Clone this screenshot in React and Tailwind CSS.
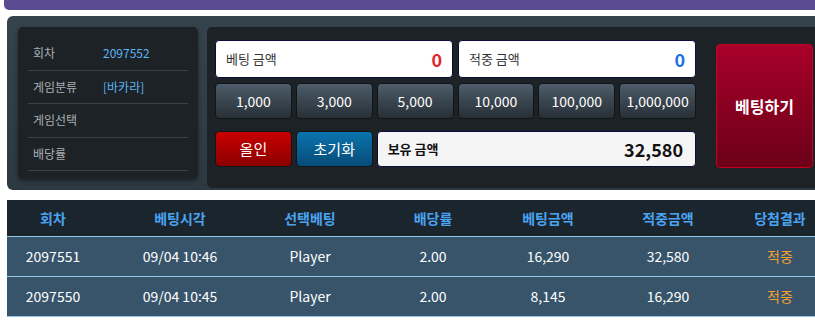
import React from "react";

const font = { fontFamily: '"Noto Sans CJK KR", "Noto Sans", sans-serif' };

const info = [
  { label: "회차", value: "2097552" },
  { label: "게임분류", value: "[바카라]" },
  { label: "게임선택", value: "" },
  { label: "배당률", value: "" },
];

const chips = ["1,000", "3,000", "5,000", "10,000", "100,000", "1,000,000"];

const rows = [
  ["2097551", "09/04 10:46", "Player", "2.00", "16,290", "32,580", "적중"],
  ["2097550", "09/04 10:45", "Player", "2.00", "8,145", "16,290", "적중"],
];

const heads = ["회차", "베팅시각", "선택베팅", "배당률", "베팅금액", "적중금액", "당첨결과"];

const cols = "grid grid-cols-[92px_162px_98px_148px_82px_158px_66px]";

export default function App() {
  return (
    <div className="w-[815px] h-[320px] overflow-hidden bg-white" style={font}>
      <div className="ml-[4px] h-[10px] w-[830px] rounded-bl-[5px] bg-[#5a4a90]" />

      {/* bet panel */}
      <div className="ml-[7px] mt-[6px] w-[830px] h-[174px] rounded-l-[6px] bg-gradient-to-b from-[#34434c] to-[#2c3941] flex items-start gap-[9px] pl-[11px] pt-[11px]">
        <div className="w-[180px] rounded-[5px] bg-[#1c2226] px-[10px] pt-[10px] pb-[8px] shadow-[0_2px_4px_rgba(0,0,0,0.4)]">
          {info.map((r) => (
            <div
              key={r.label}
              className="h-[33.5px] flex items-center pl-[5px] border-b border-[#3a4349] text-[12px]"
            >
              <span className="w-[70px] text-[#a9b0b6]">{r.label}</span>
              <span className="text-[#5cb6f2]">{r.value}</span>
            </div>
          ))}
        </div>

        <div className="flex-1 h-[161px] rounded-l-[5px] bg-[#1c2226] flex items-start pl-[8px] pt-[13px] gap-[20px]">
          <div className="w-[481px] flex flex-col">
            <div className="flex gap-[5px]">
              <div className="w-[238px] h-[38px] rounded-[4px] bg-white border border-[#0c0c3c] flex items-center justify-between px-[10px]">
                <span className="text-[13px] text-[#333]">베팅 금액</span>
                <span className="text-[18px] font-bold text-[#e52228]">0</span>
              </div>
              <div className="w-[238px] h-[38px] rounded-[4px] bg-white border border-[#0c0c3c] flex items-center justify-between px-[10px]">
                <span className="text-[13px] text-[#333]">적중 금액</span>
                <span className="text-[18px] font-bold text-[#1a74e6]">0</span>
              </div>
            </div>

            <div className="grid grid-cols-6 gap-[4px] mt-[5px]">
              {chips.map((c) => (
                <button
                  key={c}
                  className="h-[36px] rounded-[4px] border border-[#111518] bg-gradient-to-b from-[#4d5d69] to-[#283037] text-white text-[14px]"
                >
                  {c}
                </button>
              ))}
            </div>

            <div className="grid grid-cols-6 gap-[4px] mt-[12px]">
              <button className="h-[36px] rounded-[4px] border border-[#111518] bg-gradient-to-b from-[#c80000] to-[#8c0000] text-white text-[15px]">
                올인
              </button>
              <button className="h-[36px] rounded-[4px] border border-[#111518] bg-gradient-to-b from-[#0b74ae] to-[#064c78] text-white text-[15px]">
                초기화
              </button>
              <div className="col-span-4 h-[36px] rounded-[4px] bg-[#f5f5f5] border border-[#0c0c3c] flex items-center justify-between pl-[10px] pr-[12px]">
                <span className="text-[13px] font-bold text-[#111]">보유 금액</span>
                <span className="text-[18px] font-bold text-[#111]">32,580</span>
              </div>
            </div>
          </div>

          <button className="mt-[4px] w-[97px] h-[124px] rounded-[4px] border border-[#c0001c] bg-gradient-to-b from-[#a8002a] to-[#6c0018] text-white text-[16px] font-bold">
            베팅하기
          </button>
        </div>
      </div>

      {/* history table */}
      <div className="ml-[7px] mt-[10px] w-[830px]">
        <div className={`${cols} h-[37px] items-center bg-[#1b252e] border-b border-[#8fc6e4]`}>
          {heads.map((h) => (
            <div key={h} className="text-center text-[14px] font-bold text-[#4aa4f2]">
              {h}
            </div>
          ))}
        </div>
        {rows.map((r) => (
          <div
            key={r[0]}
            className={`${cols} h-[40px] items-center bg-[#37546a] border-b border-[#8fc6e4] text-[14px] text-white`}
          >
            {r.map((v, i) => (
              <div
                key={i}
                className={`text-center ${i === 6 ? "text-[#f2a134]" : ""}`}
              >
                {v}
              </div>
            ))}
          </div>
        ))}
      </div>
    </div>
  );
}
